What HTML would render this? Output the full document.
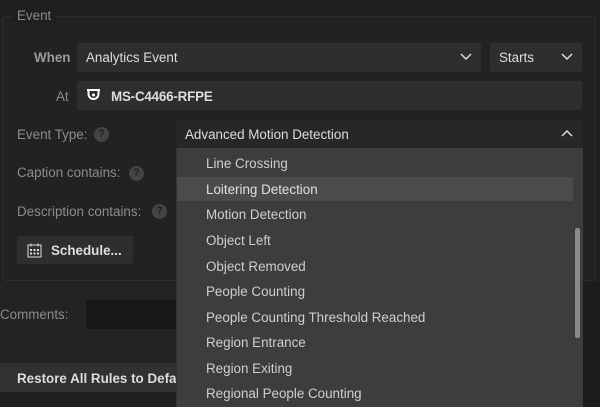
<!DOCTYPE html>
<html><head><style>
*{margin:0;padding:0;box-sizing:border-box}
body{width:600px;height:407px;overflow:hidden;background:#1f1f1f;font-family:"Liberation Sans",sans-serif;font-size:13.4px;color:#ddd;position:relative}
.a{position:absolute}
.lbl{color:#8c8c8c}
.q{position:absolute;width:15px;height:15px;border-radius:50%;background:#444;color:#222;font-size:11px;font-weight:bold;text-align:center;line-height:15px}
.in{position:absolute;background:#2e2e2e;border-radius:2px}
.it{position:absolute;left:206px;color:#cfcfcf}
</style></head><body>
<div class="a" style="left:2px;top:16px;width:594px;height:265px;border:1px solid #2c2c2c;border-radius:3px;background:#222"></div>
<div class="a" style="left:12px;top:8px;padding:0 5px;background:#1f1f1f;color:#8c8c8c">Event</div>
<div class="a" style="left:0;top:282px;width:582px;height:81px;background:#232323"></div>
<div class="a" style="left:0;top:363px;width:582px;height:29px;background:#313131"></div>
<div class="a" style="left:583px;top:282px;width:17px;height:125px;background:#1c1c1c"></div>

<div class="a" style="left:34px;top:50px;color:#9a9a9a;font-weight:bold">When</div>
<div class="in" style="left:77px;top:43px;width:404px;height:29px"></div>
<div class="a" style="left:86px;top:50px">Analytics Event</div>
<svg class="a" style="left:460px;top:53px" width="12" height="8"><path d="M1 1l5 5 5-5" stroke="#ddd" stroke-width="1.5" fill="none"/></svg>
<div class="in" style="left:490px;top:43px;width:92px;height:29px"></div>
<div class="a" style="left:499px;top:50px">Starts</div>
<svg class="a" style="left:561px;top:53px" width="12" height="8"><path d="M1 1l5 5 5-5" stroke="#ddd" stroke-width="1.5" fill="none"/></svg>

<div class="a lbl" style="left:56px;top:89px">At</div>
<div class="in" style="left:77px;top:81px;width:505px;height:29px"></div>
<svg class="a" style="left:86px;top:89px" width="15" height="13"><path d="M1 1h13M2.5 1v4a5 5 0 0 0 10 0v-4" stroke="#fff" stroke-width="2" fill="none"/><circle cx="7.5" cy="6" r="1.5" fill="#fff"/></svg>
<div class="a" style="left:111px;top:89px;font-weight:bold;letter-spacing:-0.2px">MS-C4466-RFPE</div>

<div class="a lbl" style="left:17px;top:127px">Event Type:</div>
<div class="q" style="left:94px;top:127px">?</div>
<div class="a" style="left:176px;top:120px;width:407px;height:28px;background:#272727"></div>
<div class="a" style="left:185px;top:127px">Advanced Motion Detection</div>
<svg class="a" style="left:561px;top:129px" width="12" height="8"><path d="M1 7l5-5 5 5" stroke="#ddd" stroke-width="1.5" fill="none"/></svg>

<div class="a lbl" style="left:17px;top:165px">Caption contains:</div>
<div class="q" style="left:129px;top:166px">?</div>
<div class="a lbl" style="left:17px;top:204px">Description contains:</div>
<div class="q" style="left:152px;top:204px">?</div>

<div class="a" style="left:17px;top:236px;width:116px;height:28px;background:#2e2e2e;border-radius:2px"></div>
<svg class="a" style="left:27px;top:243px" width="15" height="15"><rect x="1" y="2" width="13" height="12" stroke="#ddd" fill="none"/><path d="M4 0.5v3M11 0.5v3" stroke="#ddd"/><g fill="#ddd"><rect x="3" y="6" width="2" height="2"/><rect x="6.5" y="6" width="2" height="2"/><rect x="10" y="6" width="2" height="2"/><rect x="3" y="9.5" width="2" height="2"/><rect x="6.5" y="9.5" width="2" height="2"/><rect x="10" y="9.5" width="2" height="2"/></g></svg>
<div class="a" style="left:51px;top:243px;font-weight:bold">Schedule...</div>

<div class="a lbl" style="left:0;top:307px">Comments:</div>
<div class="a" style="left:86px;top:300px;width:100px;height:29px;background:#181818"></div>
<div class="a" style="left:17px;top:371px;font-weight:bold">Restore All Rules to Default</div>

<div class="a" style="left:176px;top:148px;width:407px;height:259px;background:#3d3d3d;border-left:1px solid #333;overflow:hidden">
<div class="a" style="left:0;top:29px;width:396px;height:24px;background:#4b4b4b"></div>
<div class="a" style="left:398px;top:80px;width:5px;height:110px;background:#8a8a8a;border-radius:2px"></div>
</div>
<div class="it" style="top:156px">Line Crossing</div>
<div class="it" style="top:182px;color:#e0e0e0">Loitering Detection</div>
<div class="it" style="top:207px">Motion Detection</div>
<div class="it" style="top:233px">Object Left</div>
<div class="it" style="top:259px">Object Removed</div>
<div class="it" style="top:284px">People Counting</div>
<div class="it" style="top:310px">People Counting Threshold Reached</div>
<div class="it" style="top:335px">Region Entrance</div>
<div class="it" style="top:361px">Region Exiting</div>
<div class="it" style="top:386px">Regional People Counting</div>
</body></html>
